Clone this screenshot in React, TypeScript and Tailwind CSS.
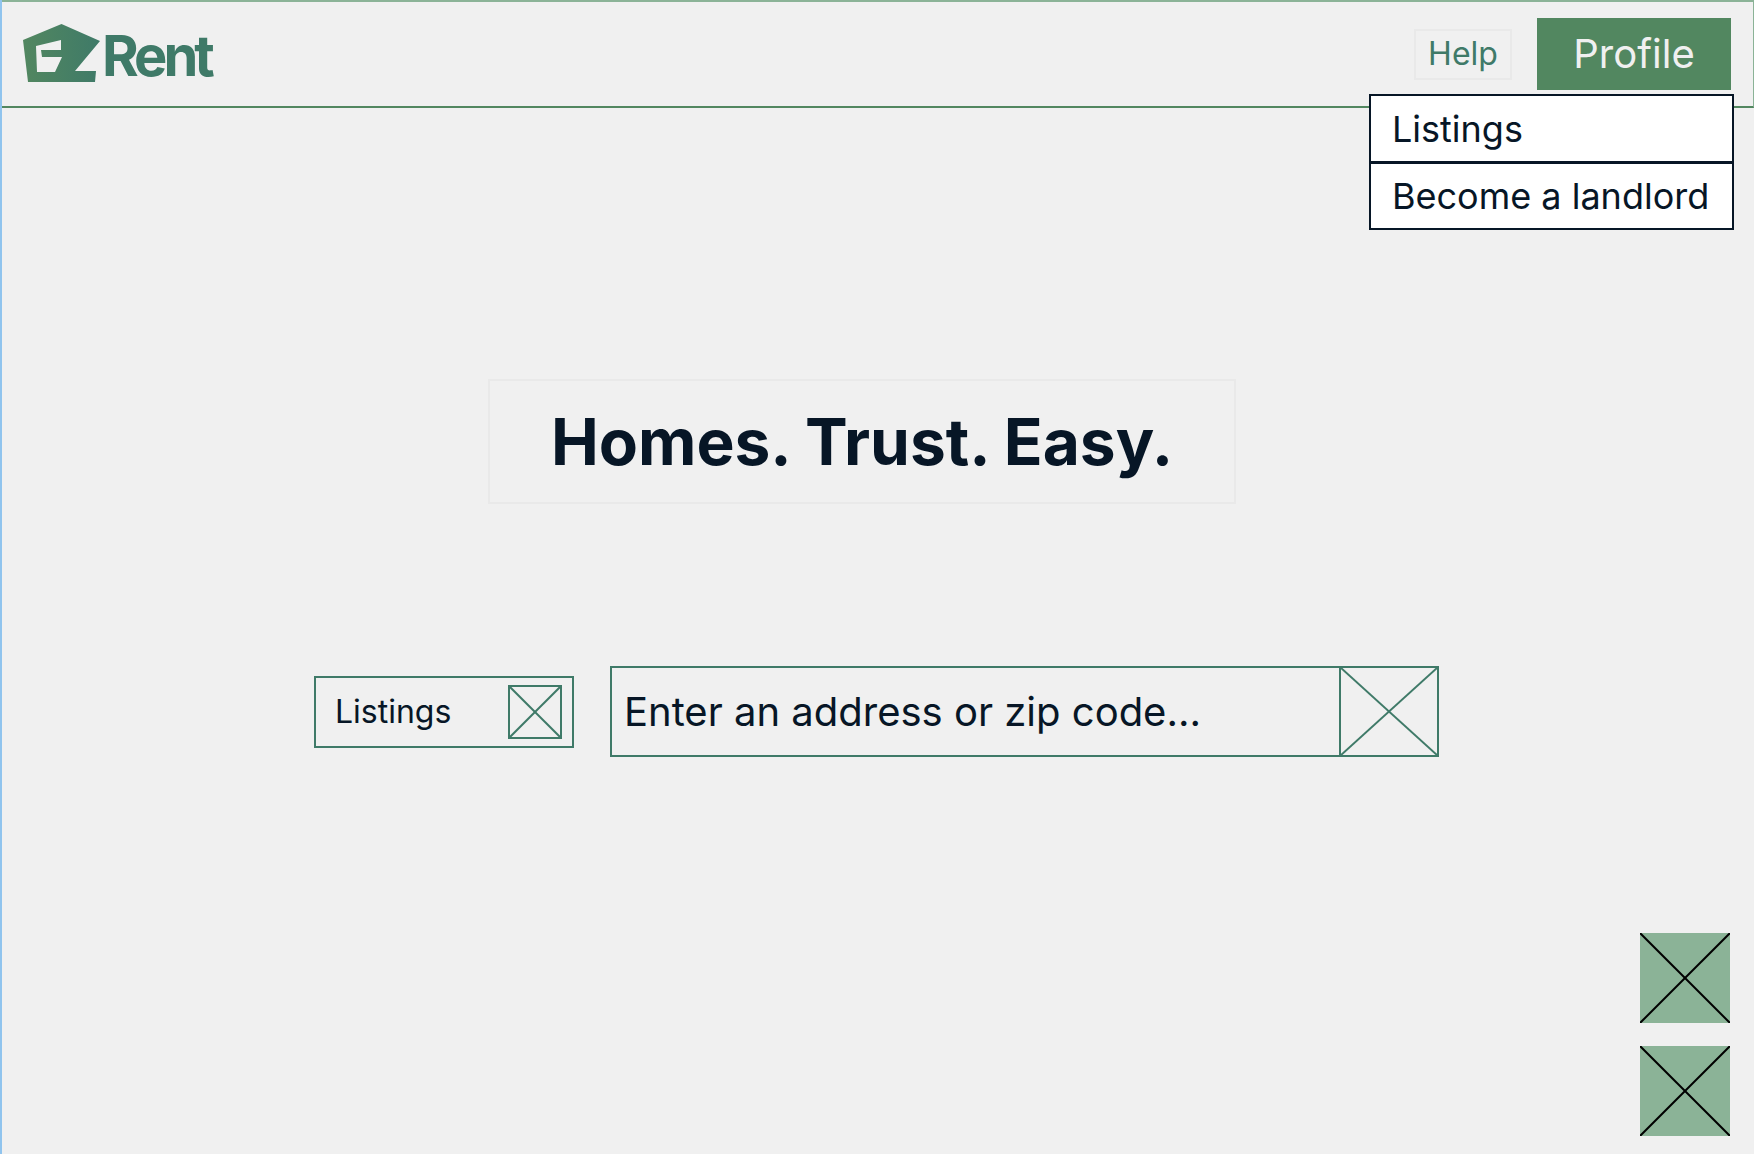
const cross = "none";
function XBox({ stroke, className }: { stroke: string; className: string }) {
  return (
    <svg className={className} viewBox="0 0 100 100" preserveAspectRatio="none">
      <line x1="0" y1="0" x2="100" y2="100" stroke={stroke} strokeWidth="2" vectorEffect="non-scaling-stroke" />
      <line x1="100" y1="0" x2="0" y2="100" stroke={stroke} strokeWidth="2" vectorEffect="non-scaling-stroke" />
    </svg>
  );
}

function Logo() {
  return (
    <div className="flex items-end">
      <svg width="84" height="60" viewBox="0 0 84 60" className="block">
        <defs>
          <linearGradient id="g" x1="0" y1="0" x2="1" y2="0">
            <stop offset="0" stopColor="#528760" />
            <stop offset="1" stopColor="#3f7a68" />
          </linearGradient>
        </defs>
        <path
          fill="url(#g)"
          fillRule="evenodd"
          d="M0 16 L38.5 0 L77 17 L52 47 L73 47 L72 58 L38 58 L5 58 Z M13 22 L38 16 L38 26 L18 26 L19 33 L39 33 L32 48 L14 48 Z"
        />
      </svg>
      <span className="-ml-[5px] font-['Inter',sans-serif] font-bold text-[56px] leading-[56px] tracking-[-4px] text-[#3f7a68]">Rent</span>
    </div>
  );
}

export default function App() {
  return (
    <div className="relative flex h-[1154px] w-[1754px] flex-col overflow-hidden border-l-2 border-l-[#90c4ee] bg-[#f0f0f0] font-['Inter',sans-serif] text-[#071626]">
      <header className="flex h-[108px] shrink-0 items-center justify-between border-t-2 border-r border-b-2 border-t-[#8bb397] border-r-[#8bb397] border-b-[#528760] pl-[21px] pr-[22px]">
        <Logo />
        <div className="flex items-center gap-[25px]">
          <button className="flex h-[51px] w-[98px] items-center justify-center border-2 border-[#e9e9e9] text-[32px] text-[#3f7a68]">Help</button>
          <button className="flex h-[72px] w-[194px] items-center justify-center bg-[#528760] text-[40px] text-[#f0f0f0]">Profile</button>
        </div>
      </header>

      <div className="absolute left-[1367px] top-[94px] w-[365px] font-['Inter',sans-serif] text-[36px]">
        <div className="flex h-[69px] items-center border-2 border-[#071626] bg-white pl-[21px]">Listings</div>
        <div className="-mt-px flex h-[68px] items-center border-2 border-[#071626] bg-white pl-[21px]">Become a landlord</div>
      </div>

      <main className="flex flex-1 flex-col">
        <div className="ml-[486px] mt-[271px] flex h-[125px] w-[748px] items-center justify-center border-2 border-[#e9e9e9] text-[64px] font-bold">Homes. Trust. Easy.</div>
        <div className="ml-[312px] mt-[162px] flex items-center gap-[36px]">
          <div className="flex h-[72px] w-[260px] items-center justify-between border-2 border-[#3f7a68] pl-[19px] pr-[10px] text-[32px]">
            <span>Listings</span>
            <div className="h-[54px] w-[54px] border-2 border-[#3f7a68]">
              <XBox stroke="#3f7a68" className="block h-full w-full" />
            </div>
          </div>
          <div className="flex h-[91px] w-[829px] items-stretch justify-between border-2 border-[#3f7a68] pl-[12px] text-[40px]">
            <span className="self-center">Enter an address or zip code...</span>
            <div className="w-[98px] border-l-2 border-[#3f7a68]">
              <XBox stroke="#3f7a68" className="block h-full w-full" />
            </div>
          </div>
        </div>
        <div className="ml-[1638px] mt-[176px] flex w-[90px] flex-col gap-[23px]">
          <div className="h-[90px] bg-[#8bb397]"><XBox stroke="#000000" className="block h-full w-full" /></div>
          <div className="h-[90px] bg-[#8bb397]"><XBox stroke="#000000" className="block h-full w-full" /></div>
        </div>
      </main>
    </div>
  );
}
